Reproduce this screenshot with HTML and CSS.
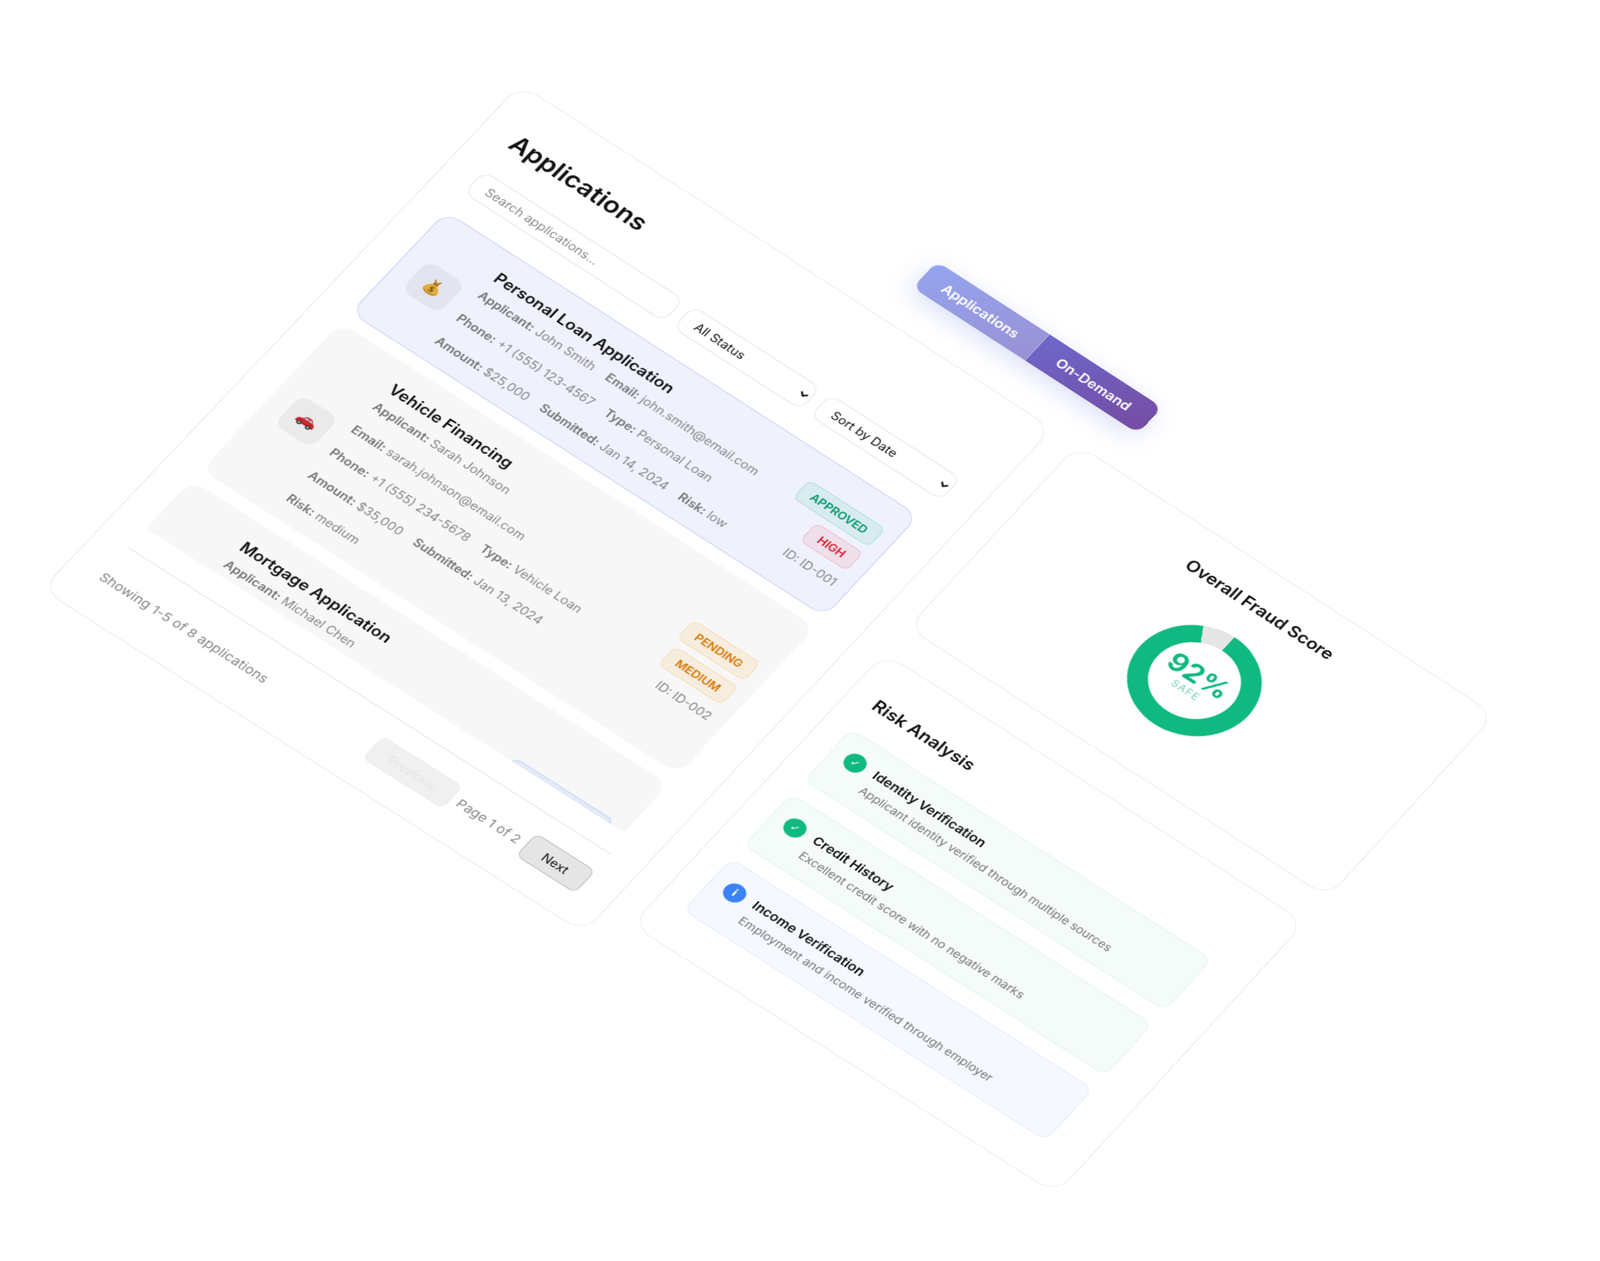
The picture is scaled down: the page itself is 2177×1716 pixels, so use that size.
FILE: index.html
```html
<!DOCTYPE html>
<html lang="en">
<head>
<meta charset="utf-8">
<title>Applications</title>
<link rel="stylesheet" href="styles.css">
</head>
<body>
<main class="scene">
  <header class="topbar">
    <nav class="tabs">
      <button class="tab tab-active">Applications</button>
      <button class="tab">On-Demand</button>
    </nav>
  </header>

  <section class="panel apps">
    <h1 class="apps-title">Applications</h1>
    <div class="filters">
      <input class="search" type="text" placeholder="Search applications...">
      <select class="select select-status"><option>All Status</option></select>
      <select class="select select-sort"><option>Sort by Date</option></select>
    </div>

    <div class="list">
      <div class="list-inner">
        <article class="card card-selected">
          <div class="thumb">
            <svg class="emoji" viewBox="0 0 24 24"><path d="M9 2.5l3 3 3-3.5 1 1-1.500 5h-5L8 3z" fill="#c48a2a"/><path d="M9.500 7.500h5l.5 1.500h-6z" fill="#8a5a17"/><path d="M9.500 9C6 11 3.500 14.500 3.500 17.500 3.500 21 7 22.500 12 22.500s8.500-1.500 8.500-5C20.500 14.500 18 11 14.500 9z" fill="#e3ae3f"/><path d="M3.800 16.500C4 21 8 22.500 12 22.500s8-1.500 8.200-6C19 20 15 21 12 21s-7-1-8.200-4.500z" fill="#b9822a"/><text x="12" y="19.500" class="emoji-dollar">$</text></svg>
          </div>
          <div class="main">
            <h2 class="card-title">Personal Loan Application</h2>
            <div class="meta">
              <span><b>Applicant:</b> John Smith</span>
              <span><b>Email:</b> john.smith@email.com</span>
              <span><b>Phone:</b> +1 (555) 123-4567</span>
              <span><b>Type:</b> Personal Loan</span>
              <span><b>Amount:</b> $25,000</span>
              <span><b>Submitted:</b> Jan 14, 2024</span>
              <span><b>Risk:</b> low</span>
            </div>
          </div>
          <div class="side">
            <span class="badge badge-green">APPROVED</span>
            <span class="badge badge-red">HIGH</span>
            <span class="card-id">ID: ID-001</span>
          </div>
        </article>

        <article class="card">
          <div class="thumb">
            <svg class="emoji" viewBox="0 0 24 24"><path d="M1.500 15c0-2.500 2-3.500 5-4l3-3.500c1-1 6-1 7.500 0l2.500 3.500c1.500.5 3 1.500 3 3.500v2.500h-21z" fill="#d8232a"/><path d="M8 11l2.200-2.500h2.800V11zM14 8.500h2.500L18.500 11H14z" fill="#9fd3ea"/><path d="M1.500 16h21v1.500h-21z" fill="#a5161b"/><circle cx="6.500" cy="17.500" r="2.800" fill="#333"/><circle cx="6.500" cy="17.500" r="1.200" fill="#ccc"/><circle cx="17.500" cy="17.500" r="2.800" fill="#333"/><circle cx="17.500" cy="17.500" r="1.200" fill="#ccc"/></svg>
          </div>
          <div class="main">
            <h2 class="card-title">Vehicle Financing</h2>
            <div class="meta">
              <span><b>Applicant:</b> Sarah Johnson</span>
              <span><b>Email:</b> sarah.johnson@email.com</span>
              <span><b>Phone:</b> +1 (555) 234-5678</span>
              <span><b>Type:</b> Vehicle Loan</span>
              <span><b>Amount:</b> $35,000</span>
              <span><b>Submitted:</b> Jan 13, 2024</span>
              <span><b>Risk:</b> medium</span>
            </div>
          </div>
          <div class="side">
            <span class="badge badge-orange">PENDING</span>
            <span class="badge badge-orange">MEDIUM</span>
            <span class="card-id">ID: ID-002</span>
          </div>
        </article>

        <article class="card">
          <div class="thumb">
            <svg class="emoji" viewBox="0 0 24 24"><path d="M5 12l7-8 7 8v9H5z" fill="#f0d3a0"/><path d="M2.500 13L12 2.500 21.500 13l-1.500 1L12 5.500 4 14z" fill="#b3261e"/><path d="M16 3h2.500v5L16 5.500z" fill="#7d2a20"/><path d="M7 14h4v7.500H7z" fill="#7b4a26"/><path d="M13.500 13.500h4.500v4h-4.500z" fill="#6db4e3" stroke="#8a5a2b" stroke-width=".7"/><circle cx="3.500" cy="21" r="1.500" fill="#4e9e3a"/><circle cx="20.500" cy="21" r="1.500" fill="#4e9e3a"/></svg>
          </div>
          <div class="main">
            <h2 class="card-title">Mortgage Application</h2>
            <div class="meta">
              <span><b>Applicant:</b> Michael Chen</span>
              <span><b>Email:</b> michael.chen@email.com</span>
              <span><b>Phone:</b> +1 (555) 345-6789</span>
              <span><b>Type:</b> Mortgage</span>
              <span><b>Amount:</b> $450,000</span>
              <span><b>Submitted:</b> Jan 12, 2024</span>
              <span><b>Risk:</b> high</span>
            </div>
          </div>
          <div class="side">
            <span class="badge badge-blue">UNDER REVIEW</span>
            <span class="badge badge-red">HIGH</span>
            <span class="card-id">ID: ID-003</span>
          </div>
        </article>
      </div>
    </div>

    <footer class="pager">
      <span class="pager-info">Showing 1-5 of 8 applications</span>
      <div class="pager-controls">
        <button class="page-btn" disabled>Previous</button>
        <span class="page-label">Page 1 of 2</span>
        <button class="page-btn page-next">Next</button>
      </div>
    </footer>
  </section>

  <div class="rail">
    <section class="panel fraud">
      <h2 class="section-title">Overall Fraud Score</h2>
      <div class="donut">
        <div class="donut-hole">
          <span class="donut-value">92%</span>
          <span class="donut-label">SAFE</span>
        </div>
      </div>
    </section>

    <section class="panel risk">
      <h2 class="section-title">Risk Analysis</h2>
      <div class="risk-list">
        <div class="risk-item risk-ok">
          <span class="risk-icon">✓</span>
          <div>
            <h3 class="risk-name">Identity Verification</h3>
            <p class="risk-desc">Applicant identity verified through multiple sources</p>
          </div>
        </div>
        <div class="risk-item risk-ok">
          <span class="risk-icon">✓</span>
          <div>
            <h3 class="risk-name">Credit History</h3>
            <p class="risk-desc">Excellent credit score with no negative marks</p>
          </div>
        </div>
        <div class="risk-item risk-info">
          <span class="risk-icon">i</span>
          <div>
            <h3 class="risk-name">Income Verification</h3>
            <p class="risk-desc">Employment and income verified through employer</p>
          </div>
        </div>
      </div>
    </section>
  </div>
</main>
</body>
</html>
```

FILE: styles.css
```css
* { box-sizing: border-box; }

html, body {
  margin: 0;
  height: 100%;
  overflow: hidden;
  background: #fff;
}

body {
  font-family: Inter, "Liberation Sans", sans-serif;
  color: #111;
}

h1, h2, h3, p { margin: 0; }

.scene {
  display: grid;
  grid-template-columns: 690px 550px;
  column-gap: 32px;
  align-items: start;
  width: 1272px;
  transform-origin: 0 0;
  transform: matrix3d(1.0683, .6868, 0, 1.226e-5, -.7959, .829, 0, -1.255e-5, 0, 0, 1, 0, 782.8, 36.1, 0, 1.00118);
}

.topbar {
  grid-column: 1 / -1;
  margin-bottom: 51px;
  padding-left: 469px;
}

.tabs {
  display: inline-flex;
  height: 43px;
  border-radius: 12px;
  overflow: hidden;
  background: linear-gradient(135deg, #667eea, #764ba2);
  box-shadow: 0 8px 28px rgba(102, 126, 234, .25);
}

.tab {
  width: 147px;
  border: 0;
  background: transparent;
  color: #fff;
  font: 600 16px Inter, sans-serif;
}

.tab-active {
  background: rgba(255, 255, 255, .3);
  border-right: 1px solid rgba(255, 255, 255, .2);
}

.panel {
  background: #fff;
  border: 1px solid #ebebeb;
  border-radius: 24px;
}

.apps {
  height: 820px;
  padding: 44px 36px 0;
}

.apps-title {
  font-size: 28px;
  font-weight: 600;
  line-height: 36px;
  margin-bottom: 31px;
}

.filters {
  display: flex;
  gap: 12px;
  margin-bottom: 30px;
}

.search {
  flex: 1;
  min-width: 0;
  height: 36px;
  padding: 0 16px;
  border: 1px solid #e5e5e5;
  border-radius: 12px;
  font: 14px Inter, sans-serif;
  background: #fff;
}

.search::placeholder { color: #888; }

.select {
  height: 36px;
  padding: 0 12px;
  border: 1px solid #e5e5e5;
  border-radius: 12px;
  background: #fff;
  color: #111;
  font: 14px Inter, sans-serif;
}

.select-status { width: 165px; }
.select-sort { width: 170px; }

.list {
  height: 514px;
  overflow-y: scroll;
  padding-right: 6px;
}

.list::-webkit-scrollbar { width: 8px; }
.list::-webkit-scrollbar-track { background: #f1f1f1; border-radius: 4px; }
.list::-webkit-scrollbar-thumb { background: #bdbdbd; border-radius: 4px; }

.list-inner {
  display: flex;
  flex-direction: column;
  gap: 16px;
  min-height: 1056px;
}

.card {
  display: flex;
  align-items: center;
  gap: 18px;
  padding: 22px 16px 18px 22px;
  background: #f7f7f7;
  border: 1px solid #f7f7f7;
  border-radius: 18px;
}

.card-selected {
  background: #eff1fd;
  border-color: #c9d1f8;
}

.thumb {
  flex: none;
  display: flex;
  align-items: center;
  justify-content: center;
  width: 48px;
  height: 48px;
  border-radius: 12px;
  background: rgba(0, 0, 0, .05);
}

.emoji { width: 24px; height: 24px; }

.emoji-dollar {
  font: 700 11px "Liberation Serif", serif;
  fill: #6b4513;
  text-anchor: middle;
}

.main { flex: 1; min-width: 0; }

.card-title {
  font-size: 18px;
  font-weight: 600;
  line-height: 22px;
  margin-bottom: 6px;
}

.meta {
  display: flex;
  flex-wrap: wrap;
  gap: 16px;
  font-size: 14px;
  line-height: 21px;
  color: #888;
}

.meta b { font-weight: 600; color: #777; }

.side {
  flex: none;
  display: flex;
  flex-direction: column;
  align-items: flex-end;
  gap: 9px;
}

.badge {
  padding: 6px 13px;
  border: 1px solid;
  border-radius: 8px;
  font-size: 13px;
  font-weight: 600;
  line-height: 16px;
}

.badge-green { color: #059669; background: rgba(16, 185, 129, .1); border-color: rgba(16, 185, 129, .2); }
.badge-red { color: #dc1f2e; background: rgba(239, 68, 68, .1); border-color: rgba(239, 68, 68, .2); }
.badge-orange { color: #d97706; background: rgba(245, 158, 11, .1); border-color: rgba(245, 158, 11, .2); }
.badge-blue { color: #1d5fe0; background: rgba(59, 130, 246, .1); border-color: rgba(59, 130, 246, .2); }

.card-id {
  font-size: 14px;
  line-height: 21px;
  color: #888;
}

.pager {
  display: flex;
  justify-content: space-between;
  align-items: center;
  margin: 30px 0 0;
  padding-top: 26px;
  border-top: 1px solid #e5e5e5;
}

.pager-info,
.page-label {
  font-size: 15px;
  color: #888;
}

.pager-controls {
  display: flex;
  align-items: center;
  gap: 8px;
}

.page-btn {
  width: 102px;
  height: 36px;
  border: 1px solid #ececec;
  border-radius: 8px;
  background: #f0f0f0;
  color: #e4e4e4;
  font: 14px Inter, sans-serif;
}

.page-next {
  width: 76px;
  background: #e5e5e5;
  border-color: #bdbdbd;
  color: #111;
}

.rail {
  display: flex;
  flex-direction: column;
  gap: 40px;
}

.fraud {
  display: flex;
  flex-direction: column;
  align-items: center;
  height: 300px;
  padding-top: 34px;
}

.section-title {
  font-size: 20px;
  font-weight: 600;
  line-height: 28px;
}

.donut {
  display: flex;
  align-items: center;
  justify-content: center;
  width: 142px;
  height: 142px;
  margin-top: 31px;
  border-radius: 50%;
  background: conic-gradient(#10b981 0 92%, #e5e5e5 92% 100%);
}

.donut-hole {
  display: flex;
  flex-direction: column;
  align-items: center;
  justify-content: center;
  width: 98px;
  height: 98px;
  border-radius: 50%;
  background: #fff;
}

.donut-value {
  font-size: 32px;
  font-weight: 700;
  line-height: 32px;
  color: #10b981;
}

.donut-label {
  font-size: 12px;
  line-height: 14px;
  letter-spacing: 1px;
  color: #6fd3b0;
}

.risk {
  height: 441px;
  padding: 44px 48px 0 30px;
}

.risk .section-title { margin-bottom: 26px; }

.risk-list {
  display: flex;
  flex-direction: column;
  gap: 21px;
}

.risk-item {
  display: flex;
  align-items: flex-start;
  gap: 12px;
  height: 84px;
  padding: 20px 16px;
  border: 1px solid;
  border-radius: 12px;
}

.risk-ok { background: #f5fbf9; border-color: #e3f6ef; }
.risk-info { background: #f5f8ff; border-color: #e3ebfd; }

.risk-icon {
  flex: none;
  display: flex;
  align-items: center;
  justify-content: center;
  width: 24px;
  height: 24px;
  border-radius: 50%;
  background: #10b981;
  color: #fff;
  font: 700 12px "DejaVu Sans", sans-serif;
}

.risk-info .risk-icon { background: #3b82f6; }

.risk-name {
  font-size: 15px;
  font-weight: 600;
  line-height: 22px;
  margin-bottom: 4px;
}

.risk-desc {
  font-size: 13.500px;
  line-height: 18px;
  color: #777;
}
```
